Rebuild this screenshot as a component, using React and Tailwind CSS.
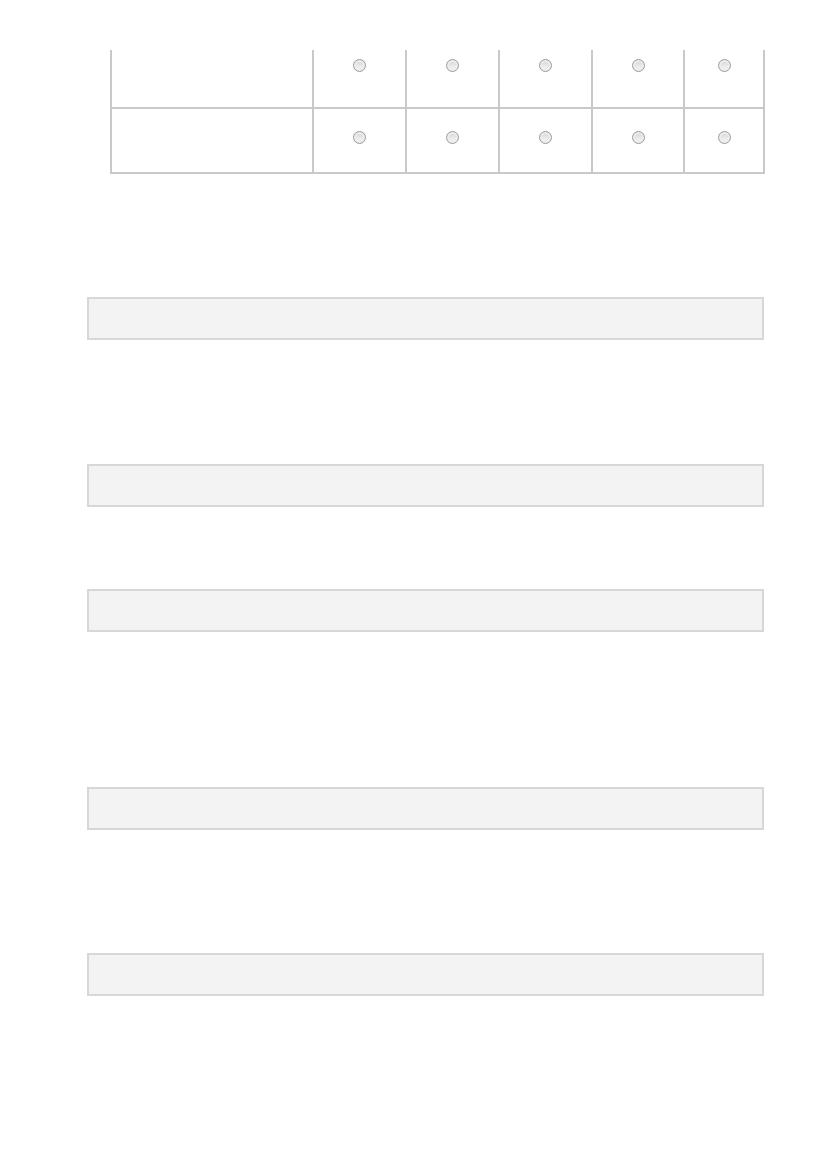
import React from "react";

const widths = ["w-[202px]", "w-[93px]", "w-[93px]", "w-[93px]", "w-[92px]", "w-[82px]"];

function Radio() {
  return (
    <span className="block w-[13px] h-[13px] rounded-full border border-[#9c9c9c] bg-linear-to-b from-[#d4d4d4] to-[#fafafa] shadow-[inset_0_0_0_2px_#ececec]" />
  );
}

function Row({ height, pad }) {
  return (
    <div className={`flex border-b-2 border-[#c9c9c9] ${height}`}>
      {widths.map((w, i) => (
        <div
          key={i}
          className={`${w} border-l-2 border-[#c9c9c9] ${i === widths.length - 1 ? "border-r-2" : ""} flex justify-center ${pad}`}
        >
          {i > 0 && <Radio />}
        </div>
      ))}
    </div>
  );
}

function Field({ mt }) {
  return <div className={`${mt} ml-[87px] w-[677px] h-[43px] border-2 border-[#d7d7d7] bg-[#f3f3f3]`} />;
}

export default function App() {
  return (
    <main className="w-[827px] h-[1169px] bg-white font-['Liberation_Sans',sans-serif] overflow-hidden">
      <div className="pt-[50px] ml-[110px] w-[655px]">
        <Row height="h-[59px]" pad="pt-[9px]" />
        <Row height="h-[65px]" pad="pt-[22px]" />
      </div>
      <Field mt="mt-[123px]" />
      <Field mt="mt-[124px]" />
      <Field mt="mt-[82px]" />
      <Field mt="mt-[155px]" />
      <Field mt="mt-[123px]" />
    </main>
  );
}
